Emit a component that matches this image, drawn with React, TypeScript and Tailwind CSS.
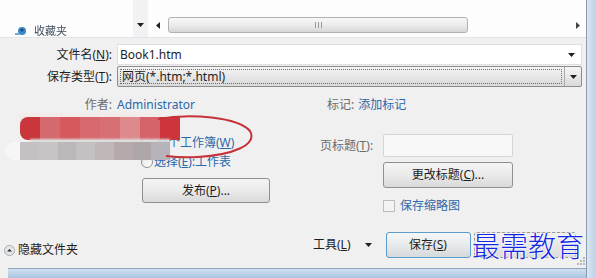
import React from 'react';

const Tri = ({ className = '' }: { className?: string }) => (
  <svg width="7" height="4" viewBox="0 0 7 4" className={className}>
    <path d="M0 0h7L3.5 4z" fill="#1f1f1f" />
  </svg>
);

const Radio = () => (
  <span className="w-[12px] h-[12px] shrink-0 rounded-full border border-[#8e8f8f] bg-gradient-to-br from-[#e6e6e6] to-[#ffffff]" />
);

const redCells = [
  'bg-[#c9363c]',
  'bg-[#d46a6e]',
  'bg-[#d5595d]',
  'bg-[#d8696e]',
  'bg-[#d76f75]',
  'bg-[#dc8a8c]',
  'bg-[#d7636a]',
  'bg-[#cd353c]',
];

const grayCells = [
  'bg-[#c5c1c2]',
  'bg-[#c8c3c4]',
  'bg-[#bcb8b9]',
  'bg-[#c5c1c2]',
  'bg-[#c0b7b8]',
  'bg-[#b5a9ab]',
  'bg-[#aea6a9]',
  'bg-[#b6b4ba]',
];

const btn =
  'border border-[#8f8f8f] rounded-[3px] bg-gradient-to-b from-[#f4f4f4] via-[#ebebeb] to-[#d9d9d9] flex items-center justify-center text-[#1e1e1e]';

export default function App() {
  return (
    <div className="relative w-[595px] h-[278px] overflow-hidden flex bg-[#f0f0f0] text-[12px] leading-[14px] text-[#1e1e1e] font-['Noto_Sans','Noto_Sans_CJK_SC',sans-serif]">
      <div className="w-[586px] flex flex-col">
        {/* explorer strip */}
        <div className="h-[38px] shrink-0 flex bg-[#fdfdfd] border-b border-[#e1e4e8]">
          <div className="w-[133px] pl-[15px] pt-[24px] flex items-center gap-[7px] h-[38px]">
            <svg width="12" height="10" viewBox="0 0 12 10" className="shrink-0">
              <circle cx="7" cy="5" r="4" fill="#3d88c4" />
              <circle cx="7" cy="4" r="1.6" fill="#1d4d7a" />
              <path d="M0 8h4" stroke="#6aa9d8" strokeWidth="2" />
            </svg>
            <span className="text-[11px] leading-[12px] text-[#40505f] blur-[0.6px]">收藏夹</span>
          </div>
          <div className="w-[15px] bg-[#f0f2f4] flex justify-center pt-[23px]">
            <Tri />
          </div>
          <div className="flex-1 flex items-start pt-[17px]">
            <div className="w-[20px] h-[16px] flex items-center justify-center">
              <svg width="4" height="7" viewBox="0 0 4 7">
                <path d="M4 0v7L0 3.5z" fill="#222" />
              </svg>
            </div>
            <div className="w-[300px] h-[16px] rounded-[3px] border border-[#b1b1b1] bg-gradient-to-b from-[#f7f7f7] via-[#ececec] to-[#d6d6d6] flex items-center justify-center gap-[2px]">
              <span className="w-[1px] h-[6px] bg-[#9a9a9a]" />
              <span className="w-[1px] h-[6px] bg-[#9a9a9a]" />
              <span className="w-[1px] h-[6px] bg-[#9a9a9a]" />
            </div>
            <div className="flex-1" />
            <div className="w-[16px] h-[16px] flex items-center justify-center">
              <svg width="4" height="7" viewBox="0 0 4 7">
                <path d="M0 0v7L4 3.5z" fill="#444" />
              </svg>
            </div>
          </div>
        </div>

        {/* file name */}
        <div className="flex items-center mt-[6px] h-[21px]">
          <div className="w-[112px] text-right">
            文件名(<u>N</u>):
          </div>
          <div className="ml-[5px] w-[465px] h-[21px] bg-white border border-[#e0e0e0] flex items-center pl-[2px] pr-[6px]">
            <span className="flex-1">Book1.htm</span>
            <Tri />
          </div>
        </div>

        {/* save type */}
        <div className="flex items-center mt-[1px] h-[21px]">
          <div className="w-[112px] text-right">
            保存类型(<u>T</u>):
          </div>
          <div className="ml-[5px] w-[465px] h-[21px] border border-[#8c8c8c] rounded-[2px] bg-gradient-to-b from-[#f5f5f5] to-[#dadada] flex">
            <div className="flex-1 m-[2px] border border-dotted border-[#6f6f6f] flex items-center pl-[1px]">
              网页(*.htm;*.html)
            </div>
            <div className="w-[17px] border-l border-[#a9a9a9] flex items-center justify-center">
              <Tri />
            </div>
          </div>
        </div>

        {/* author / tags */}
        <div className="flex items-center mt-[11px] h-[14px]">
          <div className="w-[327px] flex">
            <span className="w-[112px] text-right text-[#6b6b6b]">作者:</span>
            <span className="ml-[5px] text-[#2d68a8]">Administrator</span>
          </div>
          <span className="text-[#6b6b6b]">标记:</span>
          <span className="ml-[4px] text-[#2d68a8]">添加标记</span>
        </div>

        {/* options */}
        <div className="flex h-[100px]">
          <div className="w-[140px]" />
          <div className="w-[180px] flex flex-col">
            <label className="mt-[24px] h-[14px] ml-[1px] flex items-center gap-[3px] text-[#2d68a8]">
              <Radio />
              <span>
                整个工作簿(<u>W</u>)
              </span>
            </label>
            <label className="mt-[5px] h-[14px] ml-[1px] flex items-center gap-[1px] text-[#2d68a8]">
              <Radio />
              <span>
                选择(<u>E</u>):工作表
              </span>
            </label>
            <button className={`mt-[9px] ml-[2px] w-[128px] h-[25px] ${btn}`}>
              发布(<u>P</u>)...
            </button>
          </div>
          <div className="flex flex-col">
            <div className="mt-[22px] h-[23px] flex items-center">
              <span className="w-[63px] text-[#6b6b6b]">
                页标题(<u>T</u>):
              </span>
              <div className="w-[130px] h-[23px] bg-[#f8f8f8] border border-[#d5d5d5] rounded-[2px]" />
            </div>
            <button className={`mt-[5px] ml-[63px] w-[130px] h-[26px] ${btn}`}>
              更改标题(<u>C</u>)...
            </button>
            <label className="mt-[11px] ml-[63px] h-[13px] flex items-center">
              <span className="w-[12px] h-[12px] border border-[#bdbdbd] bg-[#f3f3f3]" />
              <span className="ml-[5px] text-[#2d68a8]">保存缩略图</span>
            </label>
          </div>
        </div>

        {/* bottom buttons */}
        <div className="flex items-center mt-[20px] h-[26px]">
          <div className="w-[313px] mt-[10px] flex items-center pl-[4px] gap-[3px]">
            <svg width="11" height="11" viewBox="0 0 11 11">
              <circle cx="5.5" cy="5.5" r="5" fill="#e4e6e8" stroke="#a7abb0" />
              <path d="M3 6.5L5.5 4 8 6.5z" fill="#2b2b2b" />
            </svg>
            <span>隐藏文件夹</span>
          </div>
          <span>
            工具(<u>L</u>)
          </span>
          <Tri className="ml-[14px]" />
          <button className="ml-[14px] w-[85px] h-[26px] rounded-[3px] border border-[#5a9ccc] bg-gradient-to-b from-[#f4f6f7] via-[#e8eaeb] to-[#d6d9db] flex items-center justify-center">
            保存(<u>S</u>)
          </button>
          <div className="ml-[3px] w-[102px] h-[26px] rounded-[3px] border border-dashed border-[#9a9a9a] bg-gradient-to-b from-[#f2f2f2] to-[#dcdcdc]" />
        </div>

        <div className="flex-1" />
        <div className="h-[10px] ml-[8px] border-t border-[#90a8c2] bg-gradient-to-b from-[#cfe0f0] to-[#a9c4de]" />
      </div>

      {/* window frame */}
      <div className="w-[9px] border-l border-[#8a9bb0] bg-gradient-to-r from-[#dbe6f2] to-[#bfd2e6]" />

      {/* redaction mosaics */}
      <div className="absolute left-[18px] top-[113px] w-[150px] h-[6px] rounded-t-[6px] bg-[#f3eaea] blur-[1px]" />
      <div className="absolute left-[20px] top-[117px] w-[160px] h-[23px] flex rounded-l-[8px] overflow-hidden">
        {redCells.map((c, i) => (
          <div key={i} className={`flex-1 ${c}`} />
        ))}
      </div>
      <div className="absolute left-[30px] top-[139px] w-[140px] h-[4px] bg-[#dedada] blur-[1px]" />
      <div className="absolute left-[5px] top-[142px] w-[165px] h-[18px] flex overflow-hidden rounded-l-full">
        <div className="w-[15px] bg-[#f6f6f6]" />
        {grayCells.map((c, i) => (
          <div key={i} className={`flex-1 ${c}`} />
        ))}
      </div>

      {/* hand-drawn annotation */}
      <svg className="absolute left-0 top-0 pointer-events-none" width="595" height="278">
        <path
          d="M158 119 C190 113, 238 117, 250 131 C258 145, 232 155, 198 157 C184 158, 174 157, 166 156"
          fill="none"
          stroke="#c6323a"
          strokeWidth="2"
        />
      </svg>

      {/* resize grip */}
      <svg className="absolute left-[577px] top-[257px]" width="8" height="8" viewBox="0 0 8 8">
        <rect x="6" y="0" width="2" height="2" fill="#b8b8b8" />
        <rect x="3" y="3" width="2" height="2" fill="#b8b8b8" />
        <rect x="6" y="3" width="2" height="2" fill="#b8b8b8" />
        <rect x="0" y="6" width="2" height="2" fill="#b8b8b8" />
        <rect x="3" y="6" width="2" height="2" fill="#b8b8b8" />
        <rect x="6" y="6" width="2" height="2" fill="#b8b8b8" />
      </svg>

      {/* watermark */}
      <div className="absolute left-[472px] top-[228px] text-[28px] leading-[34px] text-[#1427e4] font-['Noto_Sans_CJK_SC',sans-serif] font-light [text-shadow:0_0_2px_#fff,0_0_2px_#fff,0_0_1px_#fff]">
        最需教育
      </div>
    </div>
  );
}
